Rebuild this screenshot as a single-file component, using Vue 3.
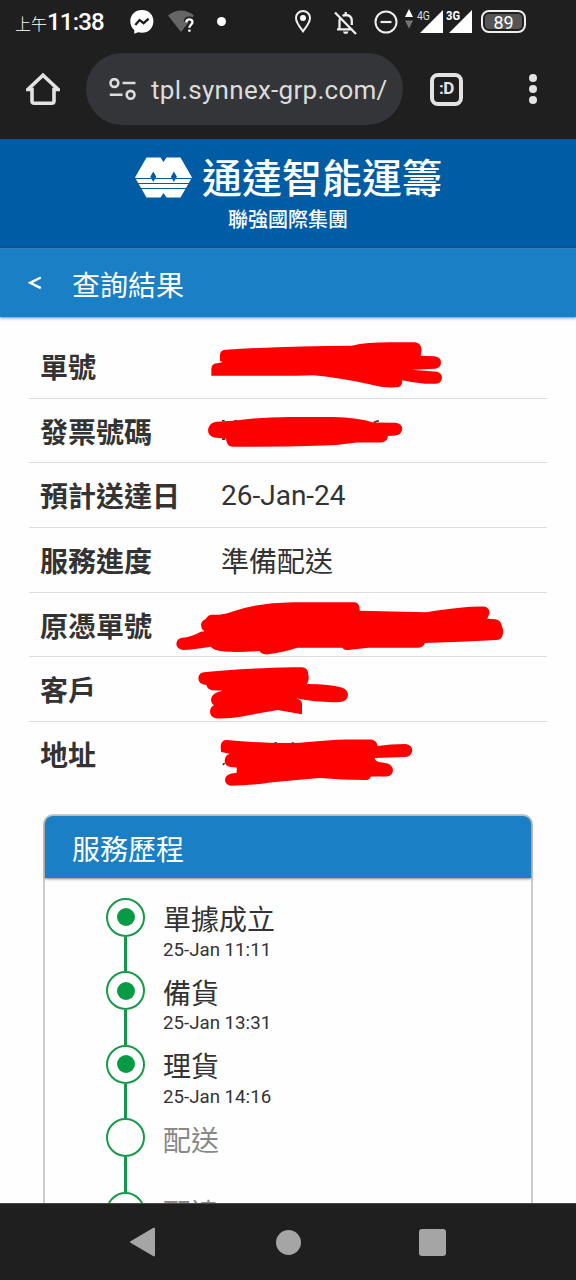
<script setup>
const fields = [
  {
    label: '單號',
    ink: 'translate(161 -4.3) scale(.3333)',
    mask: 'M64 138V116Q66 101 82 101L98 97L90 94V74Q92 60 108 60Q280 49 485 48Q530 38 600 38H675Q694 40 695 62L692 78L733 80Q753 82 753 98Q753 115 735 117L665 120L742 126Q757 131 756 145Q754 162 738 162H705Q670 160 637 152Q638 174 615 173Q585 176 535 163Q440 143 370 137L320 138Z',
  },
  {
    label: '發票號碼',
    ink: 'translate(161 -68.9) scale(.3333)',
    mask: 'M80 275L140 271Q200 262 300 261H430Q505 263 550 277L617 278Q636 281 637 296Q635 314 617 316L594 318Q592 336 574 337H500Q450 345 400 346Q260 351 128 350Q110 350 108 326L72 322Q54 317 54 300Q58 276 80 275Z',
    specks: 'M96 272H104M133 272H142M551 277L558 274L567 272M96 327H106',
  },
  { label: '預計送達日', value: '26-Jan-24', latin: true },
  { label: '服務進度', value: '準備配送' },
  {
    label: '原憑單號',
    ink: 'translate(131 -3.2) scale(.3333)',
    mask: 'M66 144Q93 143 122 126L133 124Q124 119 123 105Q124 93 138 87Q145 74 157 75Q190 76 218 65Q290 39 400 37H585Q600 39 599 63L800 67Q910 49 972 50Q989 53 989 70L982 87L1006 88Q1024 91 1026 110Q1031 119 1029 132Q1027 149 1010 151Q900 157 795 160Q790 174 775 174H625L565 181Q551 181 547 174H412Q370 188 320 194Q303 194 299 184Q200 191 165 180Q156 176 152 171Q100 180 69 181Q50 178 49 163Q50 146 66 144Z',
  },
  {
    label: '客戶',
    ink: 'translate(131 -67.3) scale(.3333)',
    mask: 'M132 248Q220 237 400 233H427Q445 235 445 256Q449 268 441 283Q510 283 547 294Q564 301 564 316Q563 334 540 337Q480 340 408 326Q426 331 426 342V374L352 361Q250 380 220 384Q190 387 167 386Q150 382 150 365Q151 352 162 347Q153 341 153 328Q156 308 188 303L156 302Q142 299 139 286Q115 284 115 266Q116 250 132 248Z',
  },
  {
    label: '地址',
    ink: 'translate(161 -1.9) scale(.3333)',
    mask: 'M110 60Q230 71 330 68Q420 59 470 58H545Q561 62 563 78Q600 72 648 72Q667 76 667 92Q664 110 646 111L554 114Q556 124 568 126L593 130Q609 137 609 151Q607 168 590 169H543Q539 180 525 180Q455 180 390 174Q310 181 240 187Q180 197 122 197Q105 193 105 178Q106 160 140 158V142L121 141Q104 137 104 122Q105 106 119 101L93 96L92 77Q94 60 110 60Z',
    specks: 'M254 68H260M305 69H312M98 134L104 130',
  },
]

const steps = [
  { name: '單據成立', time: '25-Jan 11:11', done: true },
  { name: '備貨', time: '25-Jan 13:31', done: true },
  { name: '理貨', time: '25-Jan 14:16', done: true },
  { name: '配送', time: '', done: false },
  { name: '配達', time: '', done: false },
]
</script>

<template>
  <div class="screen">
    <div class="status">
      <span class="clock"><span class="ampm">上午</span>11:38</span>
      <svg class="messenger" width="24" height="24" viewBox="0 0 24 24">
        <path fill="#fff" d="M12 0C5.300 0 .3 4.700 .3 11.200c0 3.700 1.500 6.600 4 8.700V23.700l3.700-1.400c1.200.3 2.500.5 4 .5 6.700 0 11.400-5.100 11.400-11.600S18.700 0 12 0Z" />
        <path fill="none" stroke="#1f1f1f" stroke-width="2.300" d="M5.300 15L9.600 10L13.600 13.200L18.600 8.600" />
      </svg>
      <svg class="wifi" width="28" height="24" viewBox="0 0 28 24">
        <path fill="#666" d="M0 5.500Q13-4.500 26 5.500L13 22Z" />
        <path fill="none" stroke="#1f1f1f" stroke-width="5" d="M18 12Q18.500 9 21.400 9T24.500 12C24.500 14.500 21.400 14.700 21.400 17.800V21.800" />
        <path fill="none" stroke="#fff" stroke-width="2.300" d="M18.200 12.300Q18.500 9.300 21.400 9.300T24.500 12C24.500 14.500 21.400 14.700 21.400 17.800M21.400 19.400V21.800" />
      </svg>
      <span class="notice-dot"></span>
      <svg class="pin" width="16" height="23" viewBox="0 0 16 23">
        <path fill="none" stroke="#eee" stroke-width="2" d="M8 21.300C5.500 18 1 12.700 1 8a7 7 0 0 1 14 0C15 12.700 10.500 18 8 21.300Z" />
        <circle cx="8" cy="8" r="3" fill="#fff" />
      </svg>
      <svg class="bell" width="24" height="24" viewBox="0 0 24 24">
        <path fill="none" stroke="#eee" stroke-width="2.300" d="M3 18.300H18.500M5.500 18V10Q5.500 8.200 6.500 6.900M8.600 4.900Q10 4 11.700 4Q17.800 4.200 17.800 10V14M11.700 1V4M1 1.500L22 23" />
        <path fill="#eee" d="M9 20.500H14.500Q14 23 11.700 23T9 20.500Z" />
      </svg>
      <svg class="dnd" width="24" height="24" viewBox="0 0 24 24">
        <circle cx="12" cy="12" r="10.500" fill="none" stroke="#eee" stroke-width="2" />
        <path stroke="#eee" stroke-width="2.200" d="M6.500 12H17.500" />
      </svg>
      <svg class="data" width="8" height="20" viewBox="0 0 8 20">
        <path fill="#fff" d="M4 0L8 8H0Z" />
        <path fill="#777" d="M4 19.500L0 11.500H8Z" />
      </svg>
      <svg class="signal" width="27" height="24" viewBox="0 0 27 24">
        <path fill="#fff" d="M26 0V23H3Z" />
        <text class="net" x="0" y="10" textLength="13" lengthAdjust="spacingAndGlyphs">4G</text>
      </svg>
      <svg class="signal second" width="27" height="24" viewBox="0 0 27 24">
        <path fill="#fff" d="M26 0V23H3Z" />
        <text class="net heavy" x="0" y="10" textLength="14" lengthAdjust="spacingAndGlyphs">3G</text>
      </svg>
      <span class="battery"><span class="level">89</span></span>
    </div>

    <div class="browser">
      <svg class="home" width="34" height="34" viewBox="0 0 34 34">
        <path fill="none" stroke="#e3e3e3" stroke-width="3.600" stroke-linejoin="miter" d="M1.800 17.500H6V29Q6 31.300 8.300 31.300H25.700Q28 31.300 28 29V17.500H32.200L17 3.200Z" />
      </svg>
      <div class="address">
        <svg width="27" height="22" viewBox="0 0 27 22">
          <g fill="none" stroke="#dcdcdc" stroke-width="2.600">
            <circle cx="5.400" cy="5" r="3.900" />
            <circle cx="21.600" cy="16.800" r="3.900" />
            <path d="M13.500 5H26.500M.8 16.800H13.500" />
          </g>
        </svg>
        <span class="url">tpl.synnex-grp.com/</span>
      </div>
      <div class="tabs">:D</div>
      <div class="more"><i></i><i></i><i></i></div>
    </div>

    <header class="brand">
      <div class="brand-row">
        <svg width="57" height="41" viewBox="0 0 57 41">
          <path fill="#fff" d="M11.500 .5H25.500L28.500 5L31.500 .5H45.500L57 20.500L45.500 40.500H31.500L28.500 36L25.500 40.500H11.500L0 20.500Z" />
          <path fill="#005ca5" d="M18.300 14.500L21.300 19.700L18.300 25L15.300 19.700ZM38.900 14.500L41.900 19.700L38.900 25L35.900 19.700Z" />
          <path stroke="#005ca5" stroke-width="1.200" d="M0 21.500H16.500M20 21.500H37M40.500 21.500H57M1 26.500H56M4 31.500H53" />
        </svg>
        <span class="brand-name">通達智能運籌</span>
      </div>
      <div class="group">聯強國際集團</div>
    </header>

    <div class="title">
      <svg width="14" height="14" viewBox="0 0 14 14">
        <path fill="none" stroke="#fff" stroke-width="2.500" d="M12.800 1.500L2.200 6.800L12.800 12.100" />
      </svg>
      <h1>查詢結果</h1>
    </div>

    <main class="content">
      <div class="fields">
        <div v-for="field in fields" :key="field.label" class="field">
          <span class="label">{{ field.label }}</span>
          <span v-if="field.value" :class="{ latin: field.latin }">{{ field.value }}</span>
          <svg v-if="field.mask" class="ink" viewBox="0 0 518 64.600">
            <g :transform="field.ink">
              <path v-if="field.specks" :d="field.specks" stroke="#333" stroke-width="5" fill="none" />
              <path :d="field.mask" fill="#f00" />
            </g>
          </svg>
        </div>
      </div>

      <section class="card">
        <h2>服務歷程</h2>
        <ol>
          <li v-for="step in steps" :key="step.name" :class="{ done: step.done }">
            <div class="rail">
              <span class="node"></span>
              <span class="line"></span>
            </div>
            <div class="step">
              <div class="name">{{ step.name }}</div>
              <div class="time">{{ step.time }}</div>
            </div>
          </li>
        </ol>
      </section>
    </main>

    <nav class="nav">
      <svg width="27" height="30" viewBox="0 0 27 30">
        <path fill="#a5a5a5" stroke="#a5a5a5" stroke-width="2" stroke-linejoin="round" d="M25 1.500V28.500L2 15Z" />
      </svg>
      <span class="circle"></span>
      <span class="square"></span>
    </nav>
  </div>
</template>

<style>
body {
  margin: 0;
  background: #fefefe;
}
</style>

<style scoped>
.screen {
  display: flex;
  flex-direction: column;
  width: 576px;
  height: 1280px;
  overflow: hidden;
  background: #fefefe;
  color: #333;
  font-family: Roboto, "Noto Sans CJK TC", sans-serif;
}
svg {
  display: block;
  flex: none;
}
.status {
  display: flex;
  align-items: center;
  height: 43px;
  flex: none;
  background: #1f1f1f;
  color: #fff;
}
.clock {
  display: flex;
  align-items: baseline;
  width: 89px;
  margin: 4px 0 0 15px;
  font-size: 24px;
  font-weight: 500;
  line-height: 44px;
  letter-spacing: -0.8px;
  white-space: nowrap;
}
.ampm {
  font-size: 16px;
  font-weight: 300;
  letter-spacing: 0;
}
.messenger { margin-left: 26px; }
.wifi { margin-left: 14px; }
.notice-dot {
  width: 9px;
  height: 9px;
  margin-left: 21px;
  border-radius: 50%;
  background: #fff;
}
.pin { margin-left: 69px; }
.bell { margin: 2px 0 0 23px; }
.dnd { margin-left: 16px; }
.data { margin: -5px 0 0 7px; }
.signal { margin-left: 4px; }
.signal.second { margin-left: 2px; }
.net {
  font-size: 12.500px;
  fill: #ddd;
}
.net.heavy {
  font-weight: 700;
  fill: #fff;
}
.battery {
  display: flex;
  box-sizing: border-box;
  width: 45px;
  height: 23px;
  margin-left: 8px;
  padding: 2px;
  border: 2px solid #eee;
  border-radius: 8px;
}
.level {
  flex: 1;
  border-radius: 4px;
  background: #555;
  font-size: 18px;
  line-height: 17px;
  text-align: center;
}
.browser {
  display: flex;
  align-items: center;
  box-sizing: border-box;
  height: 97px;
  flex: none;
  padding-bottom: 4px;
  border-bottom: 1px solid #40484f;
  background: #1f1f1f;
}
.home { margin-left: 26px; }
.address {
  display: flex;
  align-items: center;
  box-sizing: border-box;
  width: 317px;
  height: 72px;
  margin-left: 26px;
  padding-left: 23px;
  border-radius: 36px;
  background: #343539;
  color: #dcdcdc;
}
.url {
  margin: 2px 0 0 15px;
  font-size: 26px;
  letter-spacing: 0.27px;
}
.tabs {
  box-sizing: border-box;
  width: 33px;
  height: 33px;
  margin-left: 27px;
  border: 4px solid #e3e3e3;
  border-radius: 8px;
  color: #e3e3e3;
  font-size: 17px;
  font-weight: 700;
  line-height: 23px;
  letter-spacing: -0.5px;
  text-align: center;
}
.more {
  display: flex;
  flex-direction: column;
  gap: 3px;
  margin-left: 66px;
}
.more i {
  width: 8px;
  height: 8px;
  border-radius: 50%;
  background: #e3e3e3;
}
.brand {
  box-sizing: border-box;
  height: 108px;
  flex: none;
  padding-top: 16px;
  background: #005ca5;
  color: #fff;
}
.brand-row {
  display: flex;
  align-items: center;
  height: 42px;
  padding-left: 135px;
}
.brand-name {
  margin: 5px 0 0 10px;
  font-size: 40px;
  font-weight: 500;
  line-height: 42px;
}
.group {
  margin-top: 11px;
  font-size: 20px;
  font-weight: 500;
  line-height: 22px;
  text-align: center;
}
.title {
  display: flex;
  z-index: 1;
  align-items: center;
  box-sizing: border-box;
  height: 69px;
  flex: none;
  padding-left: 28px;
  border-top: 1px solid #3b80b5;
  background: #1b7fc5;
  box-shadow: 0 1px 3px rgba(0, 0, 0, 0.5);
  color: #fff;
}
h1, h2 {
  margin: 0;
  font-size: 28px;
  font-weight: 400;
}
h1 {
  margin: 7px 0 0 30px;
  line-height: 40px;
}
.content {
  flex: 1;
  min-height: 0;
  padding-top: 17.300px;
  overflow: hidden;
}
.fields { margin: 0 29px; }
.field {
  display: flex;
  position: relative;
  box-sizing: border-box;
  height: 64.600px;
  padding: 4px 0 0 11px;
  border-bottom: 1px solid #dedede;
  font-size: 28px;
  line-height: 62px;
}
.field:last-child { border-bottom: 0; }
.label {
  width: 181px;
  font-weight: 700;
}
.latin { margin-top: -2px; }
.ink {
  position: absolute;
  top: 0;
  left: 0;
  width: 518px;
  height: 64.600px;
  overflow: visible;
}
.card {
  height: 600px;
  margin: 27.500px 43px 0;
  border: 2px solid #ccc;
  border-radius: 10px;
}
h2 {
  height: 62px;
  padding-left: 27px;
  border-radius: 8px 8px 0 0;
  background: #1b7fc5;
  box-shadow: 0 1px 3px rgba(0, 0, 0, 0.5);
  color: #fff;
  line-height: 69px;
}
ol {
  margin: 0;
  padding: 20px 0 0 61px;
  list-style: none;
}
li {
  display: flex;
  height: 73.500px;
}
.rail {
  display: flex;
  flex-direction: column;
  align-items: center;
  width: 39px;
}
.node {
  display: flex;
  align-items: center;
  justify-content: center;
  box-sizing: border-box;
  width: 39px;
  height: 39px;
  flex: none;
  border: 2px solid #17994a;
  border-radius: 50%;
}
.done .node::before {
  width: 18px;
  height: 18px;
  border-radius: 50%;
  background: #089b45;
  content: "";
}
.line {
  width: 3px;
  flex: 1;
  background: #17944e;
}
.step {
  margin-left: 18px;
  color: #888;
}
.done .step { color: #333; }
.name {
  margin-top: 3.500px;
  font-size: 28px;
  line-height: 40px;
}
.time {
  margin-top: -1.500px;
  font-size: 18.700px;
  line-height: 21px;
}
.nav {
  display: flex;
  align-items: center;
  box-sizing: border-box;
  height: 77px;
  flex: none;
  padding-left: 129px;
  border-top: 1px solid #484848;
  background: #1f1f1f;
}
.circle {
  width: 25px;
  height: 25px;
  margin-left: 120px;
  border-radius: 50%;
  background: #a5a5a5;
}
.square {
  width: 27px;
  height: 27px;
  margin-left: 118px;
  border-radius: 3px;
  background: #a5a5a5;
}
</style>
